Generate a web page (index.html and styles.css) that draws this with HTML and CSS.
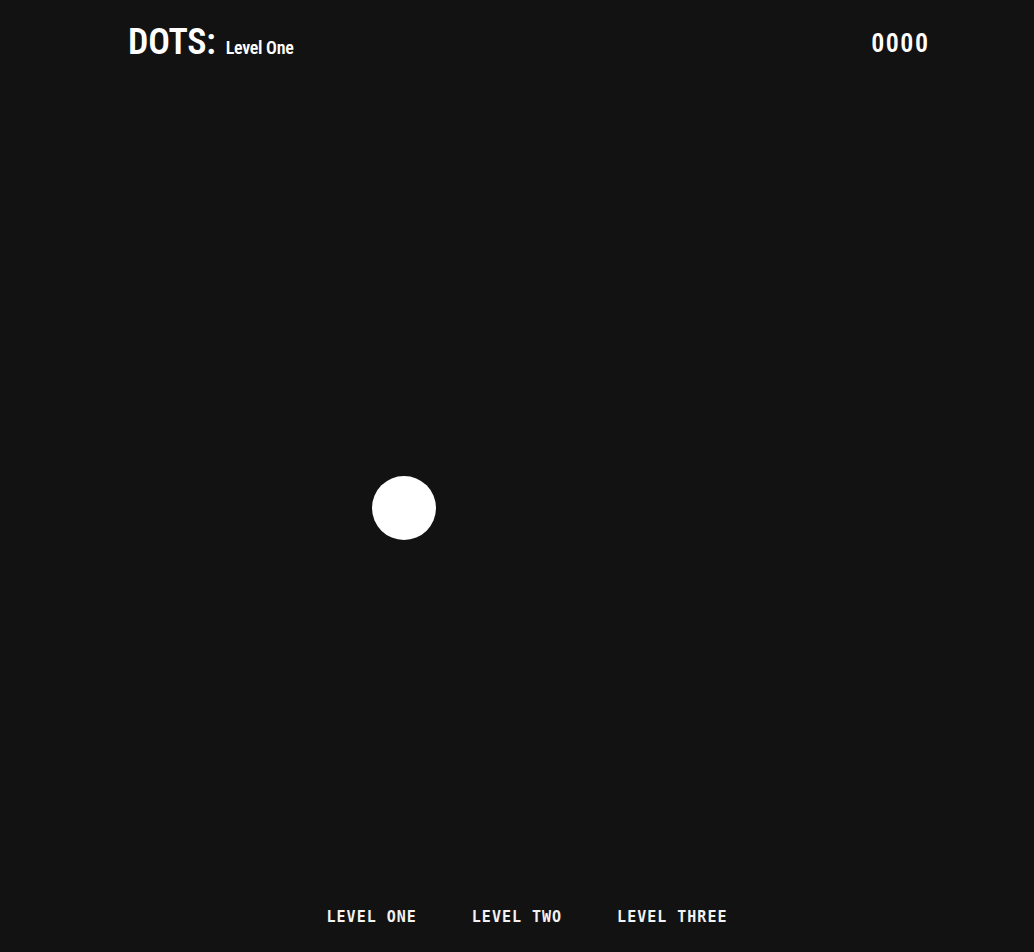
FILE: index.html
```html
<!DOCTYPE html>
<html>
<head>
<meta charset="utf-8">
<title>Dots</title>
<link rel="stylesheet" href="styles.css">
</head>
<body>
<div class="page">
  <header class="header">
    <h1 class="title">DOTS: <span class="level-name">Level One</span></h1>
    <div class="score">0000</div>
  </header>
  <main class="board">
    <div class="dot"></div>
  </main>
  <nav class="levels">
    <button class="level-btn">LEVEL ONE</button>
    <button class="level-btn">LEVEL TWO</button>
    <button class="level-btn">LEVEL THREE</button>
  </nav>
</div>
</body>
</html>
```
FILE: styles.css
```css
html, body {
  margin: 0;
  padding: 0;
  background: #121212;
  height: 100%;
}
.page {
  height: 952px;
  display: flex;
  flex-direction: column;
  color: #fff;
}
.header {
  display: flex;
  justify-content: space-between;
  align-items: flex-start;
  padding: 22px 106px 0 128px;
}
.title {
  margin: 0;
  font-family: "Roboto", sans-serif;
  font-stretch: 75%;
  font-weight: 600;
  font-size: 36px;
  line-height: 40px;
  letter-spacing: -0.2px;
}
.level-name {
  margin-left: 2px;
  font-size: 18px;
  letter-spacing: -0.3px;
}
.score {
  margin-top: 6px;
  margin-right: -1.5px;
  font-family: "Roboto", sans-serif;
  font-stretch: 75%;
  font-weight: 600;
  font-size: 26px;
  line-height: 30px;
  letter-spacing: 1.5px;
}
.board {
  flex: 1;
  position: relative;
}
.dot {
  position: absolute;
  left: 372px;
  top: 408px;
  width: 64px;
  height: 64px;
  border-radius: 50%;
  background: #fff;
}
.levels {
  display: flex;
  justify-content: center;
  gap: 55px;
  padding: 0 0 25px 20px;
}
.level-btn {
  background: none;
  border: none;
  padding: 0;
  color: #f2f2f2;
  font-family: "DejaVu Sans Mono", monospace;
  font-weight: 700;
  font-size: 15px;
  letter-spacing: 1px;
  line-height: 20px;
  cursor: pointer;
}
```
